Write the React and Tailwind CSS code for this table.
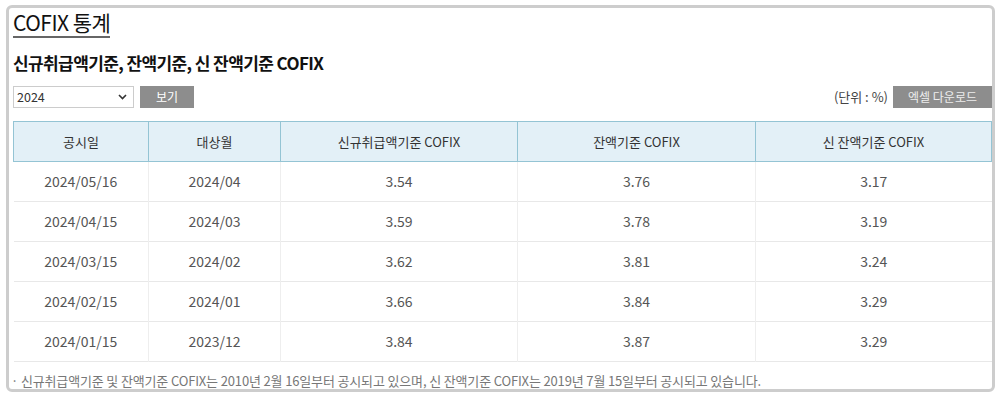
import React from "react";

const rows = [
  ["2024/05/16", "2024/04", "3.54", "3.76", "3.17"],
  ["2024/04/15", "2024/03", "3.59", "3.78", "3.19"],
  ["2024/03/15", "2024/02", "3.62", "3.81", "3.24"],
  ["2024/02/15", "2024/01", "3.66", "3.84", "3.29"],
  ["2024/01/15", "2023/12", "3.84", "3.87", "3.29"],
];

const headers = ["공시일", "대상월", "신규취급액기준 COFIX", "잔액기준 COFIX", "신 잔액기준 COFIX"];
const widths = ["w-[135px]", "w-[132px]", "w-[237px]", "w-[238px]", "w-[236px]"];

export default function App() {
  return (
    <div
      className="w-[1000px] h-[399px] bg-white overflow-hidden"
      style={{ fontFamily: '"Noto Sans CJK KR", "Noto Sans", sans-serif' }}
    >
      <div className="ml-[6px] mt-[5px] w-[989px] h-[387px] border-[3px] border-[#cdcdcd] rounded-[6px] overflow-hidden">
        <div className="pl-[4px] pt-[1px] w-[1000px]">
          <div className="inline-block border-b-2 border-[#666] pb-[1px]">
            <h1 className="text-[21px] leading-[26px] text-[#111] tracking-[-0.5px]">COFIX 통계</h1>
          </div>
          <h2 className="mt-[13px] text-[17px] leading-[24px] font-bold text-[#111] tracking-[-0.6px]">
            신규취급액기준, 잔액기준, 신 잔액기준 COFIX
          </h2>
          <div className="mt-[11px] flex items-center w-[979px]">
            <div className="w-[121px] h-[22px] border border-[#cccccc] flex items-center justify-between pl-[3px] pr-[6px] text-[12.5px] text-[#333]">
              <span>2024</span>
              <svg width="9" height="6" viewBox="0 0 9 6" fill="none">
                <path d="M1 1l3.5 3.5L8 1" stroke="#333" strokeWidth="1.6" />
              </svg>
            </div>
            <div className="ml-[6px] w-[54px] h-[22px] bg-[#8d8d8d] text-white text-[12px] flex items-center justify-center">
              보기
            </div>
            <div className="ml-auto text-[13px] text-[#444] mr-[5px]">(단위 : %)</div>
            <div className="w-[99px] h-[22px] bg-[#8d8d8d] text-[#eee] text-[12px] flex items-center justify-center">
              엑셀 다운로드
            </div>
          </div>
          <table className="mt-[13px] border-collapse w-[978px] table-fixed">
            <thead>
              <tr className="h-[40px] bg-[#e3f0f7]">
                {headers.map((h, i) => (
                  <th
                    key={h}
                    className={`${widths[i]} border border-[#94c4d4] text-[13px] font-normal text-[#333]`}
                  >
                    {h}
                  </th>
                ))}
              </tr>
            </thead>
            <tbody>
              {rows.map((r, ri) => (
                <tr key={ri} className="h-[40px] border-b border-[#e8e8e8]">
                  {r.map((c, ci) => (
                    <td
                      key={ci}
                      className={`text-center text-[14px] text-[#555] ${ci < 4 ? "border-r border-[#eeeeee]" : ""}`}
                    >
                      {c}
                    </td>
                  ))}
                </tr>
              ))}
            </tbody>
          </table>
          <p className="mt-[9px] text-[13px] text-[#777] tracking-[-0.15px] -ml-[2px]">
            · 신규취급액기준 및 잔액기준 COFIX는 2010년 2월 16일부터 공시되고 있으며, 신 잔액기준 COFIX는 2019년 7월 15일부터 공시되고 있습니다.
          </p>
        </div>
      </div>
    </div>
  );
}
